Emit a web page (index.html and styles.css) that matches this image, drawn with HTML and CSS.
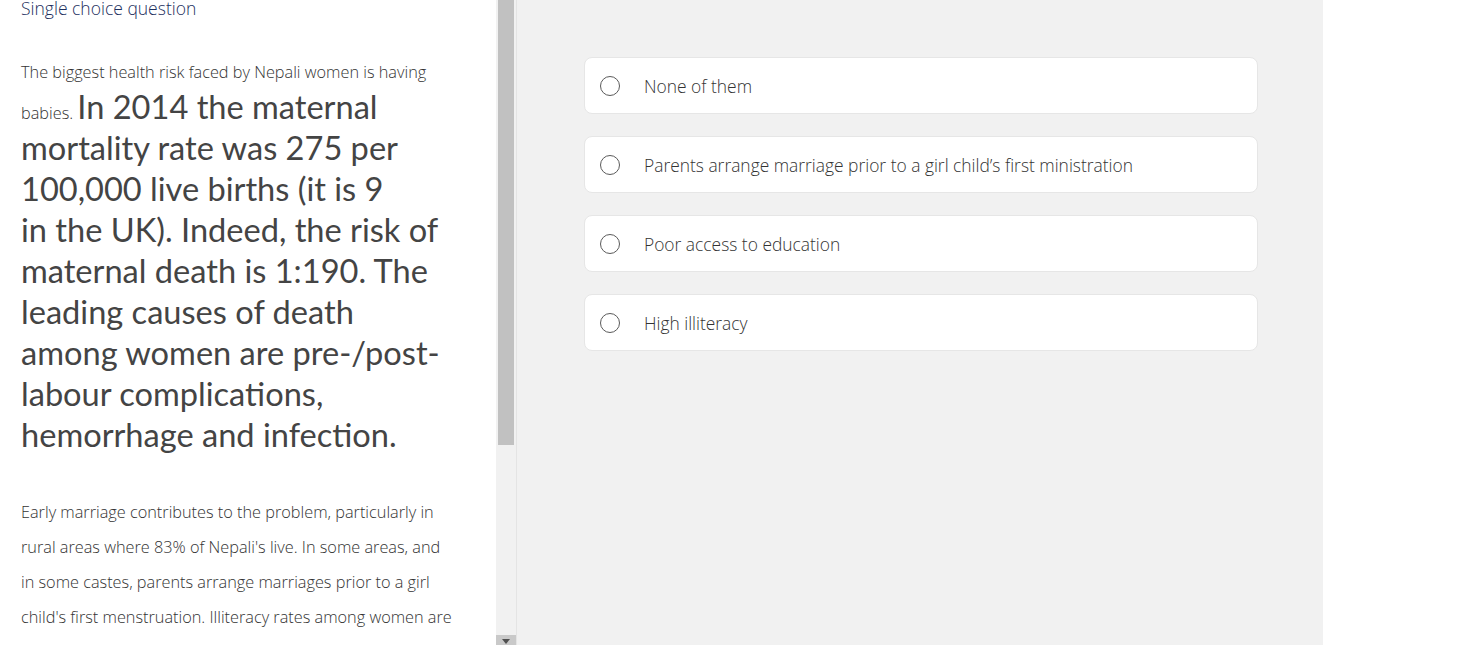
FILE: index.html
```html
<!DOCTYPE html>
<html lang="en">
<head>
  <meta charset="UTF-8"/>
  <title>Single choice question</title>
  <meta name="viewport" content="width=device-width,initial-scale=1"/>
  <link rel="stylesheet" href="styles.css">
</head>
<body>

  <div class="layout">
    <div class="passage-wrap">
      <div class="passage">
        <div class="qtype">Single choice question</div>
        <p class="text">The biggest health risk faced by Nepali women is having babies. <span class="big">In 2014 the maternal mortality rate was 275 per 100,000 live births (it is 9<br>in the UK). Indeed, the risk of maternal death is 1:190. The leading causes of death among women are pre-/post-labour complications, hemorrhage and infection.</span></p>
        <p class="text">Early marriage contributes to the problem, particularly in rural areas where 83% of Nepali's live. In some areas, and in some castes, parents arrange marriages prior to a girl child's first menstruation. Illiteracy rates among women are high.</p>
      </div>
      <div class="scrollbar">
        <div class="thumb"></div>
        <div class="track"></div>
        <div class="arrow-btn"><span class="arrow"></span></div>
      </div>
    </div>

    <div class="answers">
      <label class="option"><span class="radio"></span><span>None of them</span></label>
      <label class="option"><span class="radio"></span><span>Parents arrange marriage prior to a girl child’s first ministration</span></label>
      <label class="option"><span class="radio"></span><span>Poor access to education</span></label>
      <label class="option"><span class="radio"></span><span>High illiteracy</span></label>
    </div>

    <div class="blank"></div>
  </div>

</body>
</html>
```

FILE: styles.css
```css
html,body{margin:0;height:100%;overflow:hidden;}
body{background:#fff;color:#333;font-family:'Open Sans',sans-serif;font-weight:300;}
.layout{display:flex;height:645px;}

.passage-wrap{display:flex;width:517px;flex:none;}
.passage{width:496px;overflow:hidden;padding:0 40px 0 21px;box-sizing:border-box;}
.qtype{color:#1d2f5e;font-size:17.5px;line-height:16px;}
.text{font-size:16.3px;line-height:35px;color:#333;margin:39px 0 0;}
.text + .text{margin-top:36px;}
.big{font-family:Lato,'Open Sans',sans-serif;font-weight:400;font-size:32.6px;line-height:34px;color:#444;}

.scrollbar{width:21px;display:flex;flex-direction:column;background:#f1f1f1;border-right:1px solid #e4e4e4;box-sizing:border-box;}
.thumb{height:445px;margin:0 2px;background:#c1c1c1;}
.track{flex:1;}
.arrow-btn{height:18px;margin-bottom:-8px;background:#c9c9c9;display:flex;justify-content:center;padding-top:4px;box-sizing:border-box;}
.arrow{width:0;height:0;border-left:4px solid transparent;border-right:4px solid transparent;border-top:5px solid #505050;}

.answers{width:806px;flex:none;background:#f1f1f1;padding:57px 65px 0 67px;box-sizing:border-box;display:flex;flex-direction:column;gap:22px;}
.option{display:flex;align-items:center;height:57px;box-sizing:border-box;background:#fff;border:1px solid #e6e6e6;border-radius:8px;padding-left:15px;font-size:17.4px;color:#333;cursor:pointer;}
.radio{width:20px;height:20px;box-sizing:border-box;border:1.5px solid #5a5a5a;border-radius:50%;margin-right:24px;flex:none;}

.blank{flex:1;background:#fff;}
```
